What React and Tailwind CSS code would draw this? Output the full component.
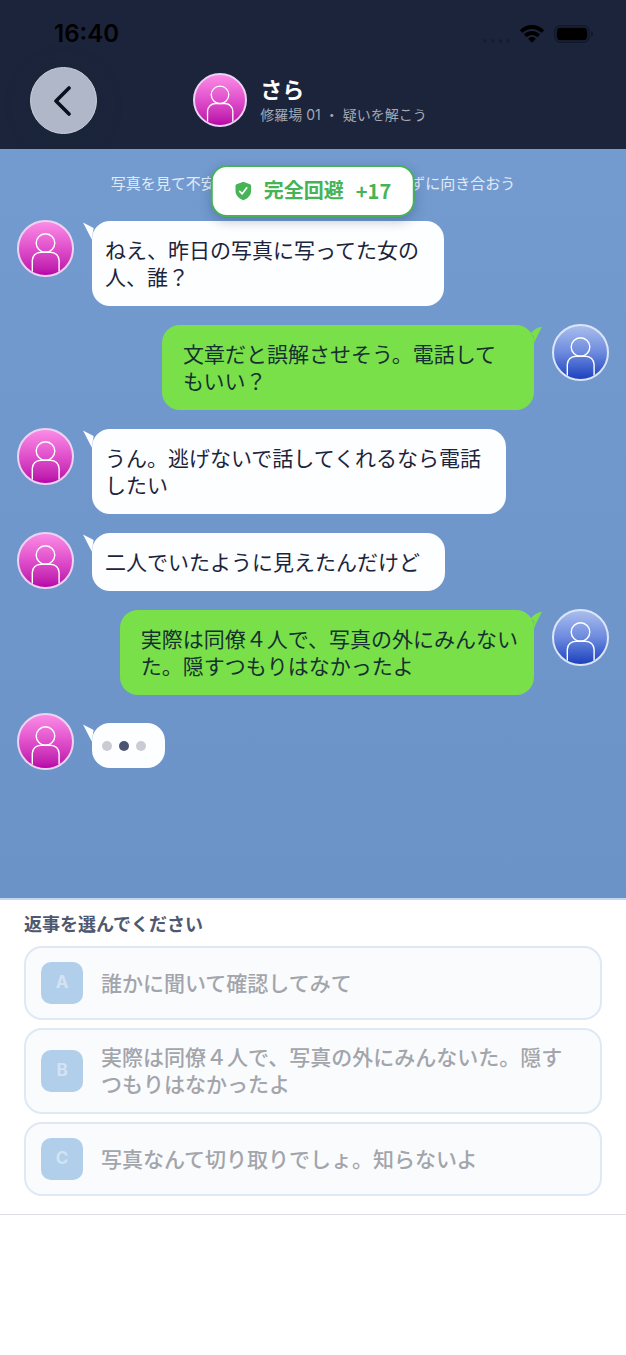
import React from "react";

const MESSAGES = [
  { from: "her", lines: ["ねえ、昨日の写真に写ってた女の", "人、誰？"] },
  { from: "me", lines: ["文章だと誤解させそう。電話して", "もいい？"], roomy: true },
  { from: "her", lines: ["うん。逃げないで話してくれるなら電話", "したい"] },
  { from: "her", lines: ["二人でいたように見えたんだけど"] },
  { from: "me", lines: ["実際は同僚４人で、写真の外にみんない", "た。隠すつもりはなかったよ"] },
];

const CHOICES = [
  { key: "A", text: "誰かに聞いて確認してみて" },
  { key: "B", text: "実際は同僚４人で、写真の外にみんないた。隠すつもりはなかったよ" },
  { key: "C", text: "写真なんて切り取りでしょ。知らないよ" },
];

function Avatar({ tone, className }) {
  const pink = tone === "pink";
  const colors = pink
    ? "border-[#ecd3f3] from-[#fb8ae6] via-[#e04fcb] to-[#b800a8]"
    : "border-[#dbe5f8] from-[#a9bdec] via-[#6d8ade] to-[#1f3fbd]";
  return (
    <div className={`shrink-0 overflow-hidden rounded-full border-2 bg-linear-to-b ${colors} ${className}`}>
      <svg viewBox="2 2 53 53" className="block h-full w-full" fill="none" stroke="#fff" strokeWidth="1.4" aria-hidden="true">
        <circle cx="28.5" cy="23" r="9.3" />
        <path d="M15.3 60V40.5a8.5 8.5 0 0 1 8.5-8.3h9.8a8.5 8.5 0 0 1 8.5 8.3V60" />
      </svg>
    </div>
  );
}

function Tail({ mine }) {
  return mine ? (
    <svg className="absolute top-px -right-2 h-[19px] w-3" viewBox="0 0 12 19" aria-hidden="true">
      <path d="M12 0.8C7.5 1.2 4 3.5 0.8 7.200L3.500 10V18.500C5.500 13 8.500 8 12 0.800Z" fill="#79e04a" />
    </svg>
  ) : (
    <svg className="absolute top-px -left-[9px] h-[18px] w-3" viewBox="0 0 12 18" aria-hidden="true">
      <path d="M0 0.500L10.600 6L10 10L8.800 17.500Z" fill="#fdfeff" />
    </svg>
  );
}

function Message({ message }) {
  const mine = message.from === "me";
  return (
    <li className={`flex items-start gap-[18px] ${mine ? "flex-row-reverse" : ""}`}>
      <Avatar tone={mine ? "blue" : "pink"} className="size-[57px]" />
      <div
        className={`relative mt-px rounded-[18px] pt-4 pb-[15px] text-[21px] leading-[27px] ${
          mine ? "bg-[#79e04a] pl-[21px] text-[#16302f]" : "bg-[#fcfeff] pr-[25px] pl-[13px] text-[#1c243b]"
        } ${mine ? (message.roomy ? "pr-[38px]" : "pr-4") : ""}`}
      >
        <Tail mine={mine} />
        {message.lines.map((line) => (
          <p key={line}>{line}</p>
        ))}
      </div>
    </li>
  );
}

function StatusBar() {
  return (
    <div className="flex h-[67px] items-center justify-between pr-8 pl-[54px] text-black">
      <span className="text-2xl leading-7 font-semibold">16:40</span>
      <div className="flex items-center gap-2.5">
        <svg viewBox="0 0 28 20" className="h-5 w-7" fill="#141c31" aria-hidden="true">
          <circle cx="3" cy="17" r="1.7" />
          <circle cx="11" cy="17" r="1.7" />
          <circle cx="18.5" cy="17" r="1.7" />
          <circle cx="26" cy="17" r="1.7" />
        </svg>
        <svg viewBox="0 0 24 18" className="h-[18px] w-6" fill="currentColor" aria-hidden="true">
          <path d="M12 0C7.400 0 3.300 1.800.3 4.700a.7.7 0 0 0 0 1l1.700 1.700a.7.7 0 0 0 1 0A13 13 0 0 1 12 3.900a13 13 0 0 1 9 3.500.7.7 0 0 0 1 0l1.700-1.700a.7.7 0 0 0 0-1A16.800 16.800 0 0 0 12 0Z" />
          <path d="M12 6c-2.900 0-5.600 1.100-7.600 3a.7.7 0 0 0 0 1l1.700 1.700a.7.7 0 0 0 1 0A7.200 7.200 0 0 1 12 9.900c1.900 0 3.600.7 4.900 1.800a.7.7 0 0 0 1 0l1.700-1.700a.7.7 0 0 0 0-1A11 11 0 0 0 12 6Z" />
          <path d="M12 11.900c-1.300 0-2.500.5-3.400 1.300a.7.7 0 0 0 0 1l2.900 3a.7.7 0 0 0 1 0l2.900-3a.7.7 0 0 0 0-1A5 5 0 0 0 12 11.900Z" />
        </svg>
        <svg viewBox="0 0 40 18" className="h-[18px] w-10" aria-hidden="true">
          <rect x="0.8" y="0.8" width="34.4" height="16.4" rx="5.400" fill="none" stroke="#10182b" strokeWidth="1.400" />
          <rect x="2.800" y="2.800" width="30.400" height="12.400" rx="3.600" fill="#000" />
          <path d="M37 6.500c1.600.5 2.200 1.500 2.200 2.500s-.6 2-2.200 2.500Z" fill="#10182b" />
        </svg>
      </div>
    </div>
  );
}

export default function App() {
  return (
    <div
      lang="ja"
      className="flex min-h-screen flex-col bg-white font-['Inter','Noto_Sans_CJK_JP',sans-serif]"
    >
      <header className="bg-[#1c243b]">
        <StatusBar />
        <div className="grid grid-cols-[1fr_auto_1fr] items-center px-[30px] pb-[15px]">
          <button
            type="button"
            aria-label="戻る"
            className="flex size-[67px] items-center justify-center rounded-full border border-[#c9cfdf] bg-[#b0b7c9] text-[#08111f] shadow-[0_4px_24px_rgba(20,44,50,0.4)]"
          >
            <svg viewBox="0 0 20 30" className="mr-1 h-[30px] w-5" fill="none" stroke="currentColor" strokeWidth="3.600" strokeLinecap="round" strokeLinejoin="round" aria-hidden="true">
              <path d="M17 2L4 15L17 28" />
            </svg>
          </button>
          <div className="flex items-center gap-[13px] pr-1.5 pb-0.5">
            <Avatar tone="pink" className="size-[54px]" />
            <div className="pt-0.5">
              <h1 className="text-[22px] leading-7 font-bold text-white">さら</h1>
              <p className="text-sm leading-[22px] text-[#a4a8b2]">修羅場 01 ・ 疑いを解こう</p>
            </div>
          </div>
        </div>
      </header>

      <main className="relative grow bg-linear-to-b from-[#739bd0] to-[#6c93c8] px-[17px] pt-6 pb-10">
        <p className="text-center text-[15px] leading-[22px] text-[#e1ebf8]">
          写真を見て不安になったさらの思いに、逃げずに向き合おう
        </p>
        <div
          role="status"
          className="absolute top-4 left-1/2 z-10 flex -translate-x-1/2 items-center gap-3 rounded-2xl border-2 border-[#45b356] bg-white px-[22px] py-[9px] text-xl leading-[30px] font-bold whitespace-nowrap text-[#45b356] shadow-[0_4px_12px_rgba(20,40,80,0.28)]"
        >
          <svg viewBox="0 0 17 20" className="h-5 w-[17px]" aria-hidden="true">
            <path d="M8.500.8L15.200 3.200Q16.300 3.600 16.300 4.800V9.800C16.300 14.500 13 17.600 8.500 19.200C4 17.600.7 14.500.7 9.800V4.800Q.7 3.600 1.800 3.200Z" fill="#45b356" />
            <path d="M4.900 10.300L7.400 12.800L12 6.800" fill="none" stroke="#fff" strokeWidth="1.700" strokeLinecap="round" strokeLinejoin="round" />
          </svg>
          <span>完全回避</span>
          <span className="font-['Noto_Sans_CJK_JP',sans-serif]">+17</span>
        </div>

        <ul className="mt-[25px] flex flex-col gap-[18px]">
          {MESSAGES.map((message) => (
            <Message key={message.lines[0]} message={message} />
          ))}
          <li className="flex items-start gap-[18px]" aria-label="入力中">
            <Avatar tone="pink" className="size-[57px]" />
            <div className="relative mt-2.5 flex h-[45px] items-center gap-[7px] rounded-[18px] bg-[#fcfeff] pr-[19px] pl-2.5">
              <Tail mine={false} />
              <span className="size-2.5 rounded-full bg-[#c9ccd3]" />
              <span className="size-2.5 rounded-full bg-[#4b5573]" />
              <span className="size-2.5 rounded-full bg-[#c9ccd3]" />
            </div>
          </li>
        </ul>
      </main>

      <section className="border-t-2 border-b border-t-[#c3d8f0] border-b-[#dcdfe4] bg-white px-6 pt-3 pb-[18px]">
        <h2 className="text-lg leading-[26px] font-bold text-[#4e5870]">返事を選んでください</h2>
        <div className="mt-2 flex flex-col gap-2">
          {CHOICES.map((choice) => (
            <button
              key={choice.key}
              type="button"
              disabled
              className="flex min-h-[74px] items-center gap-[18px] rounded-[18px] border-2 border-[#dfe9f5] bg-[#fafbfd] py-[14px] pr-7 pl-[15px] text-left"
            >
              <span className="flex size-[42px] shrink-0 items-center justify-center rounded-[10px] bg-[#b1cfea] text-[17px] font-bold text-[#d3e3f3]">
                {choice.key}
              </span>
              <span className="text-[21px] leading-[27px] font-medium text-[#a2a5ab]">{choice.text}</span>
            </button>
          ))}
        </div>
      </section>
      <div className="h-[140px] shrink-0 bg-white" />
    </div>
  );
}
